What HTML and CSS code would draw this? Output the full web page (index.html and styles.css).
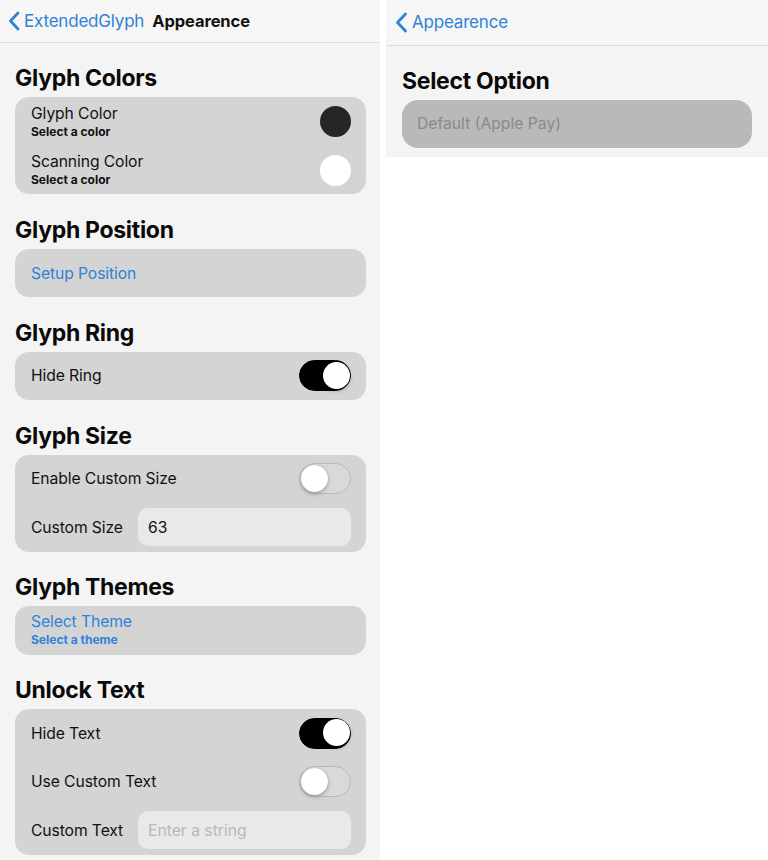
FILE: index.html
```html
<!DOCTYPE html>
<html>
<head>
<meta charset="utf-8">
<link rel="stylesheet" href="styles.css">
</head>
<body>
<div class="screens">
  <div class="panel left">
    <div class="navbar">
      <span class="back">
        <svg class="chev" width="12" height="20" viewBox="0 0 12 20"><path d="M10 2 L2.5 10 L10 18" fill="none" stroke="currentColor" stroke-width="2.8" stroke-linecap="round" stroke-linejoin="round"/></svg>
        <span>ExtendedGlyph</span>
      </span>
      <span class="nav-title">Appearence</span>
    </div>

    <h2 class="sec-title">Glyph Colors</h2>
    <div class="card">
      <div class="row">
        <div class="two-line"><div class="label">Glyph Color</div><div class="sub">Select a color</div></div>
        <span class="swatch dark"></span>
      </div>
      <div class="row">
        <div class="two-line"><div class="label">Scanning Color</div><div class="sub">Select a color</div></div>
        <span class="swatch light"></span>
      </div>
    </div>

    <h2 class="sec-title">Glyph Position</h2>
    <div class="card">
      <div class="row"><div class="label link">Setup Position</div></div>
    </div>

    <h2 class="sec-title">Glyph Ring</h2>
    <div class="card">
      <div class="row"><div class="label">Hide Ring</div><span class="toggle on"><span class="knob"></span></span></div>
    </div>

    <h2 class="sec-title">Glyph Size</h2>
    <div class="card">
      <div class="row"><div class="label">Enable Custom Size</div><span class="toggle"><span class="knob"></span></span></div>
      <div class="row"><div class="label fixed">Custom Size</div><div class="field">63</div></div>
    </div>

    <h2 class="sec-title">Glyph Themes</h2>
    <div class="card">
      <div class="row">
        <div class="two-line"><div class="label link">Select Theme</div><div class="sub link">Select a theme</div></div>
      </div>
    </div>

    <h2 class="sec-title">Unlock Text</h2>
    <div class="card">
      <div class="row"><div class="label">Hide Text</div><span class="toggle on"><span class="knob"></span></span></div>
      <div class="row"><div class="label">Use Custom Text</div><span class="toggle"><span class="knob"></span></span></div>
      <div class="row"><div class="label fixed">Custom Text</div><div class="field placeholder">Enter a string</div></div>
    </div>
  </div>

  <div class="panel right">
    <div class="navbar tall">
      <span class="back">
        <svg class="chev" width="13" height="21" viewBox="0 0 13 21"><path d="M10.5 2 L2.5 10.5 L10.5 19" fill="none" stroke="currentColor" stroke-width="2.8" stroke-linecap="round" stroke-linejoin="round"/></svg>
        <span>Appearence</span>
      </span>
    </div>
    <h2 class="sec-title">Select Option</h2>
    <div class="option">Default (Apple Pay)</div>
  </div>
</div>
</body>
</html>
```

FILE: styles.css
```css
* { box-sizing: border-box; }
html, body { margin: 0; padding: 0; background: #ffffff; }
body {
  font-family: Inter, "Open Sans", "Liberation Sans", sans-serif;
  color: #111;
  width: 768px;
  height: 860px;
  overflow: hidden;
}
.screens {
  display: flex;
  gap: 6px;
  align-items: flex-start;
}
.panel {
  background: #f4f4f4;
}
.panel.left {
  width: 380px;
  height: 860px;
  padding: 0 14px 0 15px;
}
.panel.right {
  flex: 1;
  padding: 0 16px 9.5px 16px;
}
.navbar {
  height: 43px;
  margin: 0 -14px 0 -15px;
  padding: 0 0 0 8px;
  border-bottom: 1px solid #dddddd;
  display: flex;
  align-items: center;
  gap: 8px;
  background: #f6f6f6;
}
.navbar.tall {
  height: 45.5px;
  margin: 0 -16px;
  padding-left: 9px;
}
.back {
  display: flex;
  align-items: center;
  gap: 4px;
  color: #2e82d8;
  font-size: 17px;
  letter-spacing: -0.2px;
}
.chev { display: block; }
.nav-title {
  font-weight: 700;
  font-size: 16.5px;
  letter-spacing: -0.1px;
}
.sec-title {
  margin: 0 0 6px 0;
  padding-top: 22.3px;
  font-size: 23px;
  line-height: 26px;
  font-weight: 700;
  letter-spacing: -0.3px;
  color: #0a0a0a;
}
.card {
  background: #d4d4d4;
  border-radius: 14px;
  padding: 0 15px 0 16px;
}
.row {
  height: 48.6px;
  display: flex;
  align-items: center;
  justify-content: space-between;
}
.label {
  font-size: 15.7px;
  line-height: 19px;
  letter-spacing: -0.1px;
}
.label.fixed { flex: 0 0 107px; }
.two-line { display: flex; flex-direction: column; gap: 1px; }
.sub {
  font-size: 12px;
  line-height: 16px;
  font-weight: 700;
}
.link { color: #2e82d8; }
.swatch {
  width: 31px;
  height: 31px;
  border-radius: 50%;
}
.swatch.dark { background: #262626; }
.swatch.light { background: #ffffff; }
.toggle {
  width: 52px;
  height: 31px;
  border-radius: 16px;
  border: 1.5px solid #b9b9b9;
  background: #d9d9d9;
  position: relative;
  flex: none;
}
.toggle .knob {
  position: absolute;
  top: 0.5px;
  left: 0.5px;
  width: 27px;
  height: 27px;
  border-radius: 50%;
  background: #ffffff;
  box-shadow: 0 2px 4px rgba(0,0,0,0.25), 0 0 1px rgba(0,0,0,0.3);
}
.toggle.on {
  background: #000000;
  border-color: #000000;
}
.toggle.on .knob {
  left: auto;
  right: 0.5px;
}
.field {
  flex: 1;
  height: 38px;
  border-radius: 10px;
  background: #e9e9e9;
  padding: 0 10px;
  display: flex;
  align-items: center;
  font-size: 15.7px;
}
.field.placeholder { color: #b8b8b8; }
.option {
  height: 48px;
  border-radius: 16px;
  background: #b9b9b9;
  color: #8a8a8a;
  font-size: 15.7px;
  display: flex;
  align-items: center;
  padding-left: 15px;
}
```
